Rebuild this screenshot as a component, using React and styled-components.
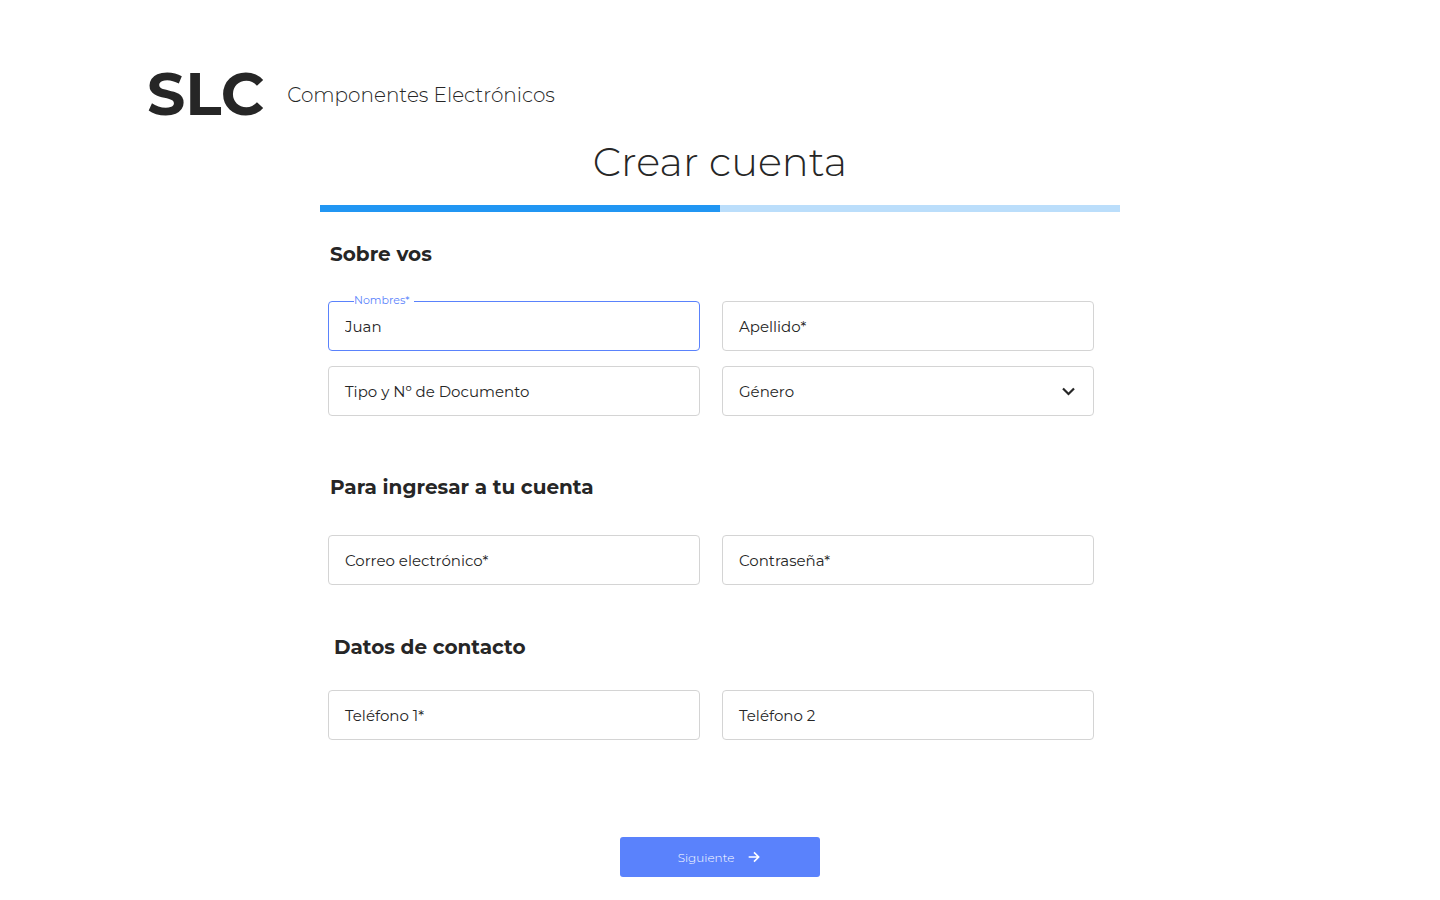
import React, { useId, useState } from "react";
import styled, { createGlobalStyle } from "styled-components";

const ink = "#262626";
const accent = "#5a82fc";

const GlobalStyle = createGlobalStyle`
  *, *::before, *::after { box-sizing: border-box; }
  body {
    margin: 0;
    background: #fff;
    color: ${ink};
    font-family: Montserrat, Inter, "Open Sans", sans-serif;
  }
  input, select, button { font-family: inherit; }
`;

const Page = styled.div`
  display: flex;
  flex-direction: column;
  padding: 64px 16px 23px;
`;

const Header = styled.header`
  display: flex;
  align-items: center;
  gap: 23px;
  width: 100%;
  max-width: 1146px;
  margin: 0 auto;
`;

const Logo = styled.span`
  font-size: 60px;
  font-weight: 700;
  line-height: 60px;
`;

const Tagline = styled.span`
  padding-top: 2px;
  font-size: 20px;
  font-weight: 300;
  line-height: 24px;
`;

const Main = styled.main`
  width: 100%;
  max-width: 800px;
  margin: 0 auto;
`;

const Title = styled.h1`
  margin: 12px 0 17px;
  font-size: 40px;
  font-weight: 300;
  line-height: 52px;
  text-align: center;
`;

const Progress = styled.div`
  height: 7px;
  background: #bbdefb;
`;

const ProgressFill = styled.div`
  height: 100%;
  background: #2196f3;
`;

const Section = styled.section`
  padding: ${(p) => p.$top}px 26px 0 8px;
`;

const SectionTitle = styled.h2`
  margin: 0 0 ${(p) => p.$gap}px;
  padding-left: ${(p) => p.$indent}px;
  font-size: 20px;
  font-weight: 700;
  line-height: 24px;
`;

const Fields = styled.div`
  display: grid;
  grid-template-columns: repeat(2, minmax(0, 1fr));
  gap: 15px 22px;
`;

const FieldBox = styled.div`
  position: relative;
  height: 50px;
`;

const control = `
  display: block;
  width: 100%;
  height: 100%;
  padding: 0 16px;
  border-radius: 4px;
  outline: none;
  background: transparent;
  color: ${ink};
  font-size: 15px;
  appearance: none;
`;

const Input = styled.input`
  ${control}
  border: 1px solid ${(p) => (p.$active ? accent : "#d4d4d4")};
`;

const Select = styled.select`
  ${control}
  border: 1px solid ${(p) => (p.$active ? accent : "#d4d4d4")};
`;

const FieldLabel = styled.label`
  position: absolute;
  pointer-events: none;
  top: ${(p) => (p.$raised ? "-8px" : "16px")};
  left: ${(p) => (p.$raised ? "26px" : "17px")};
  padding-right: ${(p) => (p.$raised ? "4px" : "0")};
  background: #fff;
  color: ${(p) => (p.$raised ? accent : ink)};
  font-size: ${(p) => (p.$raised ? "11px" : "15px")};
  line-height: ${(p) => (p.$raised ? "14px" : "20px")};
`;

const Chevron = styled.svg`
  position: absolute;
  top: 13px;
  right: 13px;
  pointer-events: none;
`;

const Actions = styled.div`
  display: flex;
  justify-content: center;
  padding-top: 97px;
`;

const NextButton = styled.button`
  display: flex;
  align-items: center;
  justify-content: center;
  gap: 12px;
  width: 200px;
  height: 40px;
  padding: 0;
  border: 0;
  border-radius: 3px;
  background: ${accent};
  color: #fff;
  font-size: 12px;
  font-weight: 300;
  cursor: pointer;
`;

function Field({ label, initial = "", type = "text", options }) {
  const id = useId();
  const [value, setValue] = useState(initial);
  const [focused, setFocused] = useState(false);
  const active = focused || value !== "";
  const shared = {
    id,
    value,
    $active: active,
    onChange: (e) => setValue(e.target.value),
    onFocus: () => setFocused(true),
    onBlur: () => setFocused(false),
  };
  return (
    <FieldBox>
      {options ? (
        <Select {...shared}>
          <option value="" />
          {options.map((o) => (
            <option key={o}>{o}</option>
          ))}
        </Select>
      ) : (
        <Input type={type} {...shared} />
      )}
      <FieldLabel htmlFor={id} $raised={active}>
        {label}
      </FieldLabel>
      {options && (
        <Chevron width="24" height="24" viewBox="0 0 24 24" fill="none" stroke={ink} strokeWidth="2.2" aria-hidden="true">
          <path d="m6 9.500 5.500 5.500 5.500-5.500" />
        </Chevron>
      )}
    </FieldBox>
  );
}

export default function App() {
  return (
    <>
      <GlobalStyle />
      <Page>
        <Header>
          <Logo>SLC</Logo>
          <Tagline>Componentes Electrónicos</Tagline>
        </Header>
        <Main>
          <Title>Crear cuenta</Title>
          <Progress role="progressbar" aria-label="Progreso" aria-valuenow={50}>
            <ProgressFill style={{ width: "50%" }} />
          </Progress>
          <form onSubmit={(e) => e.preventDefault()}>
            <Section $top={30}>
              <SectionTitle $gap={35} $indent={2}>Sobre vos</SectionTitle>
              <Fields>
                <Field label="Nombres*" initial="Juan" />
                <Field label="Apellido*" />
                <Field label="Tipo y Nº de Documento" />
                <Field label="Género" options={["Femenino", "Masculino", "Otro"]} />
              </Fields>
            </Section>
            <Section $top={59}>
              <SectionTitle $gap={36} $indent={2}>Para ingresar a tu cuenta</SectionTitle>
              <Fields>
                <Field label="Correo electrónico*" type="email" />
                <Field label="Contraseña*" type="password" />
              </Fields>
            </Section>
            <Section $top={50}>
              <SectionTitle $gap={31} $indent={6}>Datos de contacto</SectionTitle>
              <Fields>
                <Field label="Teléfono 1*" type="tel" />
                <Field label="Teléfono 2" type="tel" />
              </Fields>
            </Section>
            <Actions>
              <NextButton type="submit">
                Siguiente
                <svg width="16" height="16" viewBox="0 0 24 24" fill="none" stroke="currentColor" strokeWidth="2.4" aria-hidden="true">
                  <path d="M4 12h15M12 5l7 7-7 7" />
                </svg>
              </NextButton>
            </Actions>
          </form>
        </Main>
      </Page>
    </>
  );
}
